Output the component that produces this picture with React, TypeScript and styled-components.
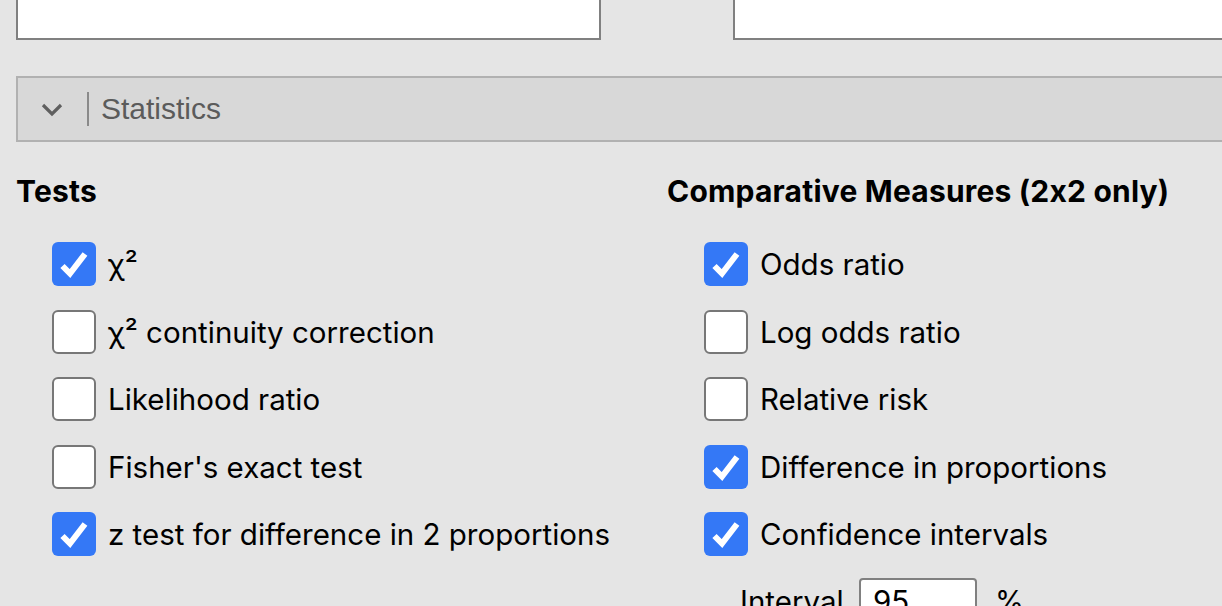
import * as React from 'react'
import styled, { createGlobalStyle } from 'styled-components'

const GlobalStyle = createGlobalStyle`
  html, body {
    margin: 0;
    padding: 0;
    background: #e5e5e5;
    overflow: hidden;
  }
  body {
    font-family: Inter, "Noto Sans", "Liberation Sans", sans-serif;
    font-feature-settings: "calt" 0;
    color: #000;
  }
`

const Page = styled.div`
  width: 1300px;
  height: 606px;
  padding-left: 16px;
  box-sizing: border-box;
`

const TopRow = styled.div`
  display: grid;
  grid-template-columns: 585px 1fr;
  column-gap: 132px;
`

const ListBox = styled.div`
  height: 40px;
  box-sizing: border-box;
  background: #fff;
  border: 2px solid #808080;
  border-top: none;
`

const SectionHeader = styled.div`
  margin-top: 36px;
  height: 66px;
  box-sizing: border-box;
  display: flex;
  align-items: center;
  background: #d8d8d8;
  border: 2px solid #b1b1b1;
  border-right: none;
  padding-left: 23px;
`

const Chevron = styled.svg`
  width: 22px;
  height: 14px;
  margin-top: 2px;
`

const Divider = styled.div`
  width: 2px;
  height: 34px;
  background: #8a8a8a;
  margin-left: 24px;
  margin-right: 12px;
`

const SectionTitle = styled.span`
  font-family: "Liberation Sans", Arial, sans-serif;
  font-size: 30px;
  color: #5b5b5b;
`

const Columns = styled.div`
  display: grid;
  grid-template-columns: 651px 1fr;
  padding-top: 31px;
`

const Column = styled.div`
  display: flex;
  flex-direction: column;
`

const Heading = styled.div`
  font-size: 30px;
  font-weight: 700;
  line-height: 36px;
  letter-spacing: 0.2px;
  margin-bottom: 33px;
`

const OptionList = styled.div<{ $indent: number }>`
  display: flex;
  flex-direction: column;
  gap: 23.5px;
  padding-left: ${p => p.$indent}px;
`

const Option = styled.label`
  display: flex;
  align-items: center;
  gap: 12px;
  height: 44px;
  font-size: 29.5px;
  line-height: 36px;
`

const Box = styled.span<{ $on: boolean }>`
  width: 44px;
  height: 44px;
  box-sizing: border-box;
  border-radius: 6px;
  flex: none;
  display: flex;
  align-items: center;
  justify-content: center;
  background: ${p => (p.$on ? '#3478f6' : '#fff')};
  border: ${p => (p.$on ? 'none' : '2px solid #777')};
`

const IntervalRow = styled.div`
  display: flex;
  align-items: center;
  margin-top: 22px;
  padding-left: 73px;
  font-size: 29.5px;
`

const IntervalLabel = styled.span`
  width: 119px;
`

const NumberInput = styled.div`
  width: 118px;
  height: 46px;
  box-sizing: border-box;
  background: #fff;
  border: 2px solid #808080;
  border-radius: 4px;
  padding-left: 12px;
  line-height: 42px;
`

const Unit = styled.span`
  margin-left: 18px;
`

function Check({ on }: { on: boolean }) {
  return (
    <Box $on={on}>
      {on && (
        <svg width="44" height="44" viewBox="0 0 44 44">
          <polyline
            points="10.5,24 18,31.5 33,12"
            fill="none"
            stroke="#fff"
            strokeWidth="6"
            strokeLinecap="butt"
            strokeLinejoin="miter"
          />
        </svg>
      )}
    </Box>
  )
}

const tests: [string, boolean][] = [
  ['χ²', true],
  ['χ² continuity correction', false],
  ['Likelihood ratio', false],
  ["Fisher's exact test", false],
  ['z test for difference in 2 proportions', true]
]

const measures: [string, boolean][] = [
  ['Odds ratio', true],
  ['Log odds ratio', false],
  ['Relative risk', false],
  ['Difference in proportions', true],
  ['Confidence intervals', true]
]

export default function App() {
  return (
    <Page>
      <GlobalStyle />
      <TopRow>
        <ListBox />
        <ListBox />
      </TopRow>
      <SectionHeader>
        <Chevron viewBox="0 0 22 14">
          <polyline points="2,2 11,11 20,2" fill="none" stroke="#5f5f5f" strokeWidth="3.2" />
        </Chevron>
        <Divider />
        <SectionTitle>Statistics</SectionTitle>
      </SectionHeader>
      <Columns>
        <Column>
          <Heading>Tests</Heading>
          <OptionList $indent={36}>
            {tests.map(([label, on]) => (
              <Option key={label}>
                <Check on={on} />
                <span>{label}</span>
              </Option>
            ))}
          </OptionList>
        </Column>
        <Column>
          <Heading>Comparative Measures (2x2 only)</Heading>
          <OptionList $indent={37}>
            {measures.map(([label, on]) => (
              <Option key={label}>
                <Check on={on} />
                <span>{label}</span>
              </Option>
            ))}
          </OptionList>
          <IntervalRow>
            <IntervalLabel>Interval</IntervalLabel>
            <NumberInput>95</NumberInput>
            <Unit>%</Unit>
          </IntervalRow>
        </Column>
      </Columns>
    </Page>
  )
}
